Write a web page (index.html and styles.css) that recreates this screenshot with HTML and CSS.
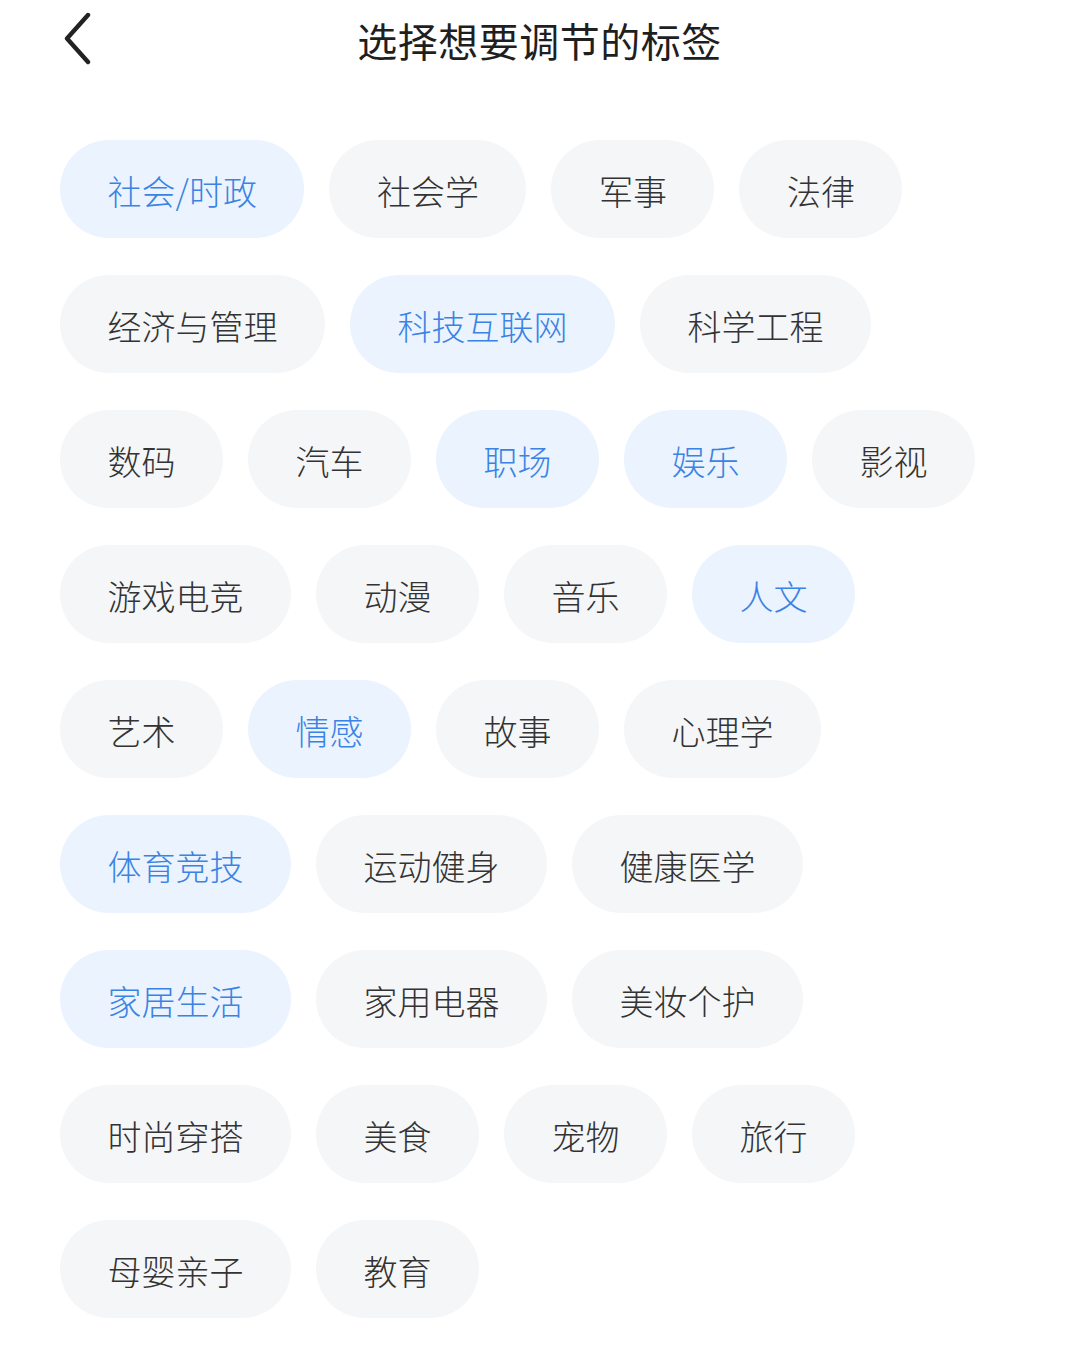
FILE: index.html
```html
<!DOCTYPE html>
<html lang="zh-CN">
<head>
    <meta charset="UTF-8">
    <meta name="viewport" content="width=device-width, initial-scale=1.0">
    <title>选择想要调节的标签</title>
    <link rel="stylesheet" href="styles.css">
</head>

<body>

    <div class="header">
        <button class="back" type="button" aria-label="返回">
            <svg width="34" height="54" viewBox="0 0 34 54">
                <path d="M28 4 L7 27.5 L28 51" fill="none" stroke="#222" stroke-width="4.4" stroke-linecap="round" stroke-linejoin="round"/>
            </svg>
        </button>
        <h1 class="title">选择想要调节的标签</h1>
    </div>

    <div class="tag-list">
        <span class="tag active">社会/时政</span>
        <span class="tag">社会学</span>
        <span class="tag">军事</span>
        <span class="tag">法律</span>
        <span class="tag">经济与管理</span>
        <span class="tag active">科技互联网</span>
        <span class="tag">科学工程</span>
        <span class="tag">数码</span>
        <span class="tag">汽车</span>
        <span class="tag active">职场</span>
        <span class="tag active">娱乐</span>
        <span class="tag">影视</span>
        <span class="tag">游戏电竞</span>
        <span class="tag">动漫</span>
        <span class="tag">音乐</span>
        <span class="tag active">人文</span>
        <span class="tag">艺术</span>
        <span class="tag active">情感</span>
        <span class="tag">故事</span>
        <span class="tag">心理学</span>
        <span class="tag active">体育竞技</span>
        <span class="tag">运动健身</span>
        <span class="tag">健康医学</span>
        <span class="tag active">家居生活</span>
        <span class="tag">家用电器</span>
        <span class="tag">美妆个护</span>
        <span class="tag">时尚穿搭</span>
        <span class="tag">美食</span>
        <span class="tag">宠物</span>
        <span class="tag">旅行</span>
        <span class="tag">母婴亲子</span>
        <span class="tag">教育</span>
    </div>

</body>
</html>
```

FILE: styles.css
```css
body {
    font-family: "Noto Sans CJK SC", "Noto Sans", sans-serif;
    background-color: #fff;
    margin: 0;
    color: #333;
}
.header {
    position: relative;
    height: 84px;
    display: flex;
    justify-content: center;
    align-items: center;
}
.back {
    position: absolute;
    left: 60px;
    top: 11px;
    padding: 0;
    border: none;
    background: none;
    cursor: pointer;
}
.back svg {
    display: block;
}
.title {
    margin: 0 0 4px;
    font-size: 40px;
    font-weight: 400;
    color: #1f1f1f;
    letter-spacing: 0.5px;
}
.tag-list {
    display: flex;
    flex-wrap: wrap;
    gap: 37px 25px;
    padding: 56px 60px 0;
}
.tag {
    box-sizing: border-box;
    height: 98px;
    line-height: 94px;
    padding: 4px 47.5px 0;
    border-radius: 49px;
    background-color: #f5f6f8;
    color: #333;
    font-size: 34px;
    font-weight: 300;
    white-space: nowrap;
}
.tag.active {
    background-color: #ebf3fe;
    color: #3a83e4;
}
```
